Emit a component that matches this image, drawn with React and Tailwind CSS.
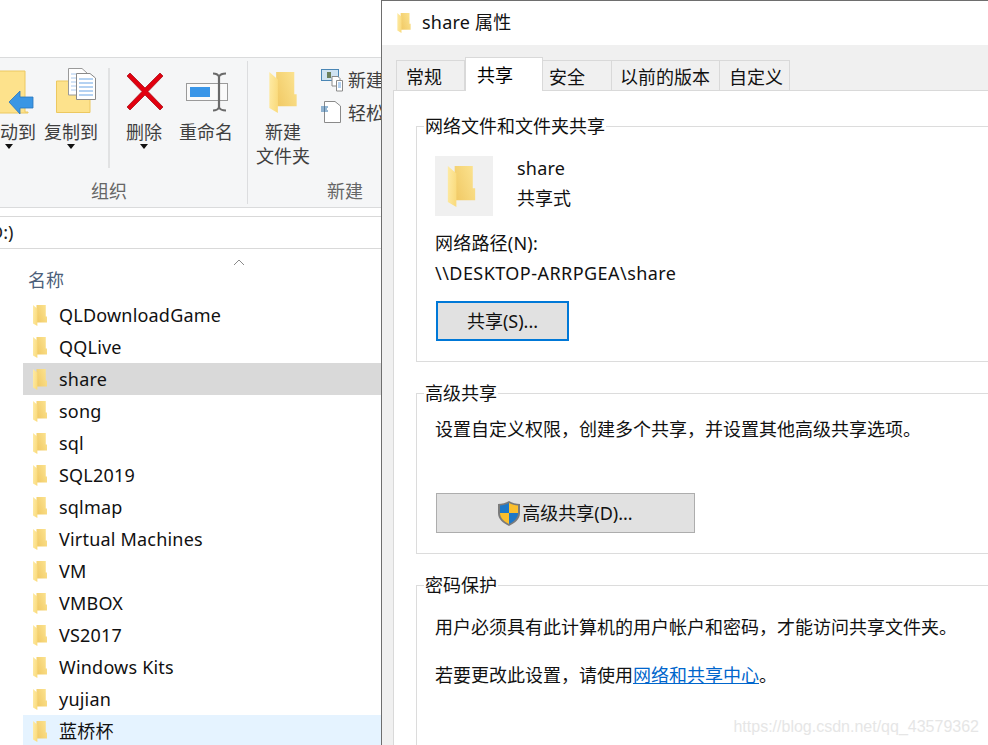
import React from "react";

function Folder({ w, h, id }) {
  return (
    <svg width={w} height={h} viewBox="0 0 80 120" className="block shrink-0">
      <defs>
        <linearGradient id={id + "b"} x1="0" y1="0.8" x2="1" y2="0.2">
          <stop offset="0" stopColor="#f1ca66" />
          <stop offset="1" stopColor="#fbe28f" />
        </linearGradient>
        <linearGradient id={id + "l"} x1="0" y1="0" x2="1" y2="0.3">
          <stop offset="0" stopColor="#feeba6" />
          <stop offset="1" stopColor="#fadc80" />
        </linearGradient>
      </defs>
      <path d="M20 0H73V65H80V100H20Z" fill={`url(#${id}b)`} />
      <path d="M0 0L25 22V120L0 105Z" fill={`url(#${id}l)`} />
    </svg>
  );
}

function DownTriangle() {
  return (
    <svg width="8" height="5" viewBox="0 0 8 5" className="block">
      <path d="M0 0H8L4 5Z" fill="#111" />
    </svg>
  );
}

function RibbonItem({ width, viewBox, label, arrow, children, className = "" }) {
  return (
    <div className={`flex flex-col items-center shrink-0 ${className}`} style={{ width }}>
      <svg width={width} height="62" viewBox={viewBox} className="block overflow-visible">
        {children}
      </svg>
      <div className="h-[24px] leading-[24px] text-[18px] text-[#3f3f3f] whitespace-nowrap">{label}</div>
      {arrow && <DownTriangle />}
    </div>
  );
}

const files = [
  "QLDownloadGame",
  "QQLive",
  "share",
  "song",
  "sql",
  "SQL2019",
  "sqlmap",
  "Virtual Machines",
  "VM",
  "VMBOX",
  "VS2017",
  "Windows Kits",
  "yujian",
  "蓝桥杯",
];

function FileRow({ name, index }) {
  const bg = name === "share" ? "bg-[#d9d9d9]" : name === "蓝桥杯" ? "bg-[#e5f3ff]" : "";
  return (
    <div className={`h-[32px] flex items-center pl-[10px] gap-[12px] text-[18px] tracking-[0.2px] text-[#111] ${bg}`}>
      <Folder w={14} h={21} id={"f" + index} />
      <span className="whitespace-nowrap">{name}</span>
    </div>
  );
}

function Explorer() {
  return (
    <div className="w-[381px] shrink-0 h-full overflow-hidden bg-white flex flex-col">
      <div className="h-[57px] shrink-0 bg-white" />
      <div className="h-[151px] shrink-0 bg-[#f5f6f7] border-y border-[#dadbdc] flex">
        <div className="w-[265px] shrink-0 -ml-[18px] flex flex-col">
          <div className="h-[121px] flex items-start">
            <RibbonItem width={54} viewBox="-18 58 54 62" label="移动到" arrow>
              <path d="M-10 71H25V112H28V113H-10Z" fill="#fde28c" stroke="#ecc860" />
              <path d="M9 102L20 91V97H33V108H20V114Z" fill="#3a96e4" stroke="#2a76bd" strokeWidth="0.8" />
            </RibbonItem>
            <RibbonItem width={54} viewBox="44 58 54 62" label="复制到" arrow className="ml-[8px]">
              <path d="M56.500 81H90V112.500H56.500Z" fill="#fde28c" stroke="#ecc860" />
              <path d="M68.500 68.500H82L87 73V95H68.500Z" fill="#fff" stroke="#9a9a9a" />
              <path d="M71 74H82M71 78H84M71 82H84M71 86H84M71 90H84" stroke="#a8c8ee" />
              <path d="M76.500 73.500H90L95.500 78V99.500H76.500Z" fill="#fff" stroke="#8a8a8a" />
              <path d="M79 79H93M79 83H93M79 87H93M79 91H93M79 95H93" stroke="#6aa5e5" />
            </RibbonItem>
            <div className="w-[2px] h-[100px] mt-[10px] ml-[10px] bg-[#e1e2e3] shrink-0" />
            <RibbonItem width={36} viewBox="126 58 36 62" label="删除" arrow className="ml-[16px]">
              <path d="M130 73L145 88L160 73L163 76L148 91.500L163 107L160 110L145 95L130 110L127 107L142 91.500L127 76Z" fill="#e2000f" stroke="#a8121c" strokeWidth="0.8" />
            </RibbonItem>
            <RibbonItem width={54} viewBox="179 58 54 62" label="重命名" className="ml-[17px]">
              <rect x="186.500" y="83.500" width="41" height="17" fill="#fafafa" stroke="#9a9a9a" />
              <rect x="190" y="87" width="20" height="10" fill="#3a96e8" />
              <path d="M219 76V108" stroke="#6a6a6a" strokeWidth="2.200" />
              <path d="M213 73.500C216 73.500 218 74.500 219 76.500C220 74.500 222 73.500 226 73.500M213 110.500C216 110.500 218 109.500 219 107.500C220 109.500 222 110.500 226 110.500" stroke="#6a6a6a" strokeWidth="1.800" fill="none" />
            </RibbonItem>
          </div>
          <div className="h-[24px] leading-[24px] text-[18px] text-[#666] text-center pr-[11px]">组织</div>
        </div>
        <div className="w-[1px] my-[3px] bg-[#dcdddf] shrink-0" />
        <div className="w-[194px] shrink-0 flex flex-col">
          <div className="h-[121px] flex items-start">
            <div className="w-[54px] ml-[8px] flex flex-col items-center shrink-0">
              <div className="h-[62px] pt-[14px] pr-[1px]">
                <Folder w={28} h={41} id="big" />
              </div>
              <div className="text-[18px] leading-[24px] text-[#3f3f3f] text-center whitespace-nowrap">
                新建
                <br />
                文件夹
              </div>
            </div>
            <div className="ml-[11px] pt-[10px] text-[18px] text-[#3f3f3f] shrink-0">
              <div className="h-[24px] flex items-center gap-[5px] whitespace-nowrap">
                <svg width="22" height="24" viewBox="320 68 22 24" className="block shrink-0">
                  <rect x="320.500" y="69.500" width="17" height="11" fill="#cfe3f2" stroke="#4a86b5" />
                  <rect x="326" y="72" width="4" height="6" fill="#6b7f5c" />
                  <path d="M331 76.500H337L339 78.500V86H331Z" fill="#fff" stroke="#8a8a8a" />
                  <path d="M335.500 80.500H341.500V91H335.500Z" fill="#fff" stroke="#8a8a8a" />
                  <path d="M337 83H340M337 85H340M337 87H340" stroke="#6aa5e5" />
                </svg>
                <span className="w-[36px] overflow-hidden">新建</span>
              </div>
              <div className="h-[24px] mt-[9px] flex items-center gap-[5px] whitespace-nowrap">
                <svg width="22" height="24" viewBox="320 101 22 24" className="block shrink-0">
                  <path d="M323.500 101.500H334L339.500 106V122.500H323.500Z" fill="#fff" stroke="#8a8a8a" />
                  <path d="M320 107H327M320 109H326M320 111H327" stroke="#2a6ea8" />
                </svg>
                <span className="w-[36px] overflow-hidden">轻松</span>
              </div>
            </div>
          </div>
          <div className="h-[24px] leading-[24px] text-[18px] text-[#666] text-center">新建</div>
        </div>
      </div>
      <div className="h-[8px] shrink-0 bg-white" />
      <div className="h-[33px] shrink-0 border-y border-[#d9d9d9] bg-white text-[18px] leading-[30px] text-[#222] -ml-[10px] whitespace-nowrap">
        D:)
      </div>
      <div className="h-[50px] shrink-0 relative pl-[28px] pt-[19px] text-[18px] leading-[24px] text-[#4c607a]">
        名称
        <svg width="12" height="8" viewBox="0 0 12 8" className="absolute left-[233px] top-[10px]">
          <path d="M1 6L6 1L11 6" fill="none" stroke="#8a8a8a" strokeWidth="1" />
        </svg>
      </div>
      <div className="ml-[23px]">
        {files.map((f, i) => (
          <FileRow key={f} name={f} index={i} />
        ))}
      </div>
    </div>
  );
}

function Tab({ label, width, selected, pl = "pl-[9px]" }) {
  return selected ? (
    <div
      className="h-[34px] -mb-px relative z-10 bg-white border-x border-t border-[#d9d9d9] text-[18px] leading-[34px] pl-[11px] text-black shrink-0"
      style={{ width }}
    >
      {label}
    </div>
  ) : (
    <div
      className={`h-[30px] border-t border-r border-[#d9d9d9] first:border-l text-[18px] leading-[33px] ${pl} text-[#111] shrink-0 bg-[#f0f0f0]`}
      style={{ width }}
    >
      {label}
    </div>
  );
}

function GroupBox({ title, className = "", children }) {
  return (
    <div className={`relative border-y border-l border-[#dcdcdc] mr-[-20px] pl-[18px] ${className}`}>
      <div className="absolute left-[7px] -top-[13px] bg-white px-[1px] text-[18px] leading-[24px] text-[#111]">
        {title}
      </div>
      {children}
    </div>
  );
}

function Shield() {
  return (
    <svg width="22" height="25" viewBox="0 0 22 25" className="block shrink-0">
      <path d="M11 0C14 2 18 3 22 3V12C22 18 17 22 11 25C5 22 0 18 0 12V3C4 3 8 2 11 0Z" fill="#7b7b7b" />
      <path d="M11 2C14 3.500 17 4.500 20 4.500V12H11Z" fill="#fbbf2d" />
      <path d="M11 2C8 3.500 5 4.500 2 4.500V12H11Z" fill="#1e78c8" />
      <path d="M2 12C2 17 6 20.500 11 23V12Z" fill="#fbbf2d" />
      <path d="M20 12C20 17 16 20.500 11 23V12Z" fill="#1e78c8" />
    </svg>
  );
}

function Dialog() {
  return (
    <div className="flex-1 min-w-0 h-full overflow-hidden flex flex-col border-l border-t border-[#6e6e6e] bg-[#f0f0f0]">
      <div className="h-[44px] shrink-0 bg-white flex items-center pl-[15px] gap-[11px] text-[18px] text-[#111]">
        <Folder w={14} h={20} id="title" />
        <span className="-mt-[2px] tracking-[0.2px]">share 属性</span>
      </div>
      <div className="h-[45px] shrink-0 flex items-end pl-[14px]">
        <Tab label="常规" width={69} />
        <Tab label="共享" width={78} selected />
        <Tab label="安全" width={69} pl="pl-[6px]" />
        <Tab label="以前的版本" width={108} pl="pl-[8px]" />
        <Tab label="自定义" width={70} pl="pl-[9px]" />
      </div>
      <div className="flex-1 ml-[11px] bg-white border-t border-l border-[#d9d9d9] pl-[22px] pt-[35px] text-[18px] leading-[30px] text-[#111]">
        <GroupBox title="网络文件和文件夹共享" className="h-[236px] pt-[29px]">
          <div className="flex items-start">
            <div className="w-[58px] h-[60px] bg-[#f0f0f0] flex items-center pl-[12px]">
              <Folder w={29} h={41} id="tile" />
            </div>
            <div className="ml-[24px] -mt-[3px]">
              <div className="tracking-[0.2px]">share</div>
              <div>共享式</div>
            </div>
          </div>
          <div className="mt-[12px] tracking-[0.2px]">网络路径(N):</div>
          <div className="tracking-[0.45px]">\\DESKTOP-ARRPGEA\share</div>
          <button className="block mt-[13px] ml-[1px] w-[133px] h-[40px] bg-[#e1e1e1] border-2 border-[#0078d7] text-[18px] text-[#111]">
            共享(S)...
          </button>
        </GroupBox>
        <GroupBox title="高级共享" className="mt-[31px] h-[161px] pt-[20px]">
          <div className="whitespace-nowrap">设置自定义权限，创建多个共享，并设置其他高级共享选项。</div>
          <button className="mt-[49px] ml-[1px] w-[259px] h-[40px] bg-[#e1e1e1] border border-[#adadad] text-[18px] text-[#111] flex items-center justify-center gap-[2px]">
            <Shield />
            <span>高级共享(D)...</span>
          </button>
        </GroupBox>
        <div className="relative border-t border-l border-[#dcdcdc] mt-[31px] mr-[-20px] h-[170px] pl-[18px] pt-[26px]">
          <div className="absolute left-[7px] -top-[13px] bg-white px-[1px] leading-[24px]">密码保护</div>
          <div className="whitespace-nowrap">用户必须具有此计算机的用户帐户和密码，才能访问共享文件夹。</div>
          <div className="mt-[18px] whitespace-nowrap">
            若要更改此设置，请使用<span className="text-[#0066cc] underline">网络和共享中心</span>。
          </div>
        </div>
      </div>
    </div>
  );
}

export default function App() {
  return (
    <div className="relative w-[988px] h-[745px] overflow-hidden flex bg-white font-['Noto_Sans','Noto_Sans_CJK_SC',sans-serif]">
      <Explorer />
      <Dialog />
      <div className="absolute right-[9px] top-[717px] font-['Liberation_Sans',sans-serif] text-[16px] leading-[20px] text-[#e6e6e6] whitespace-nowrap">
        https://blog.csdn.net/qq_43579362
      </div>
    </div>
  );
}
